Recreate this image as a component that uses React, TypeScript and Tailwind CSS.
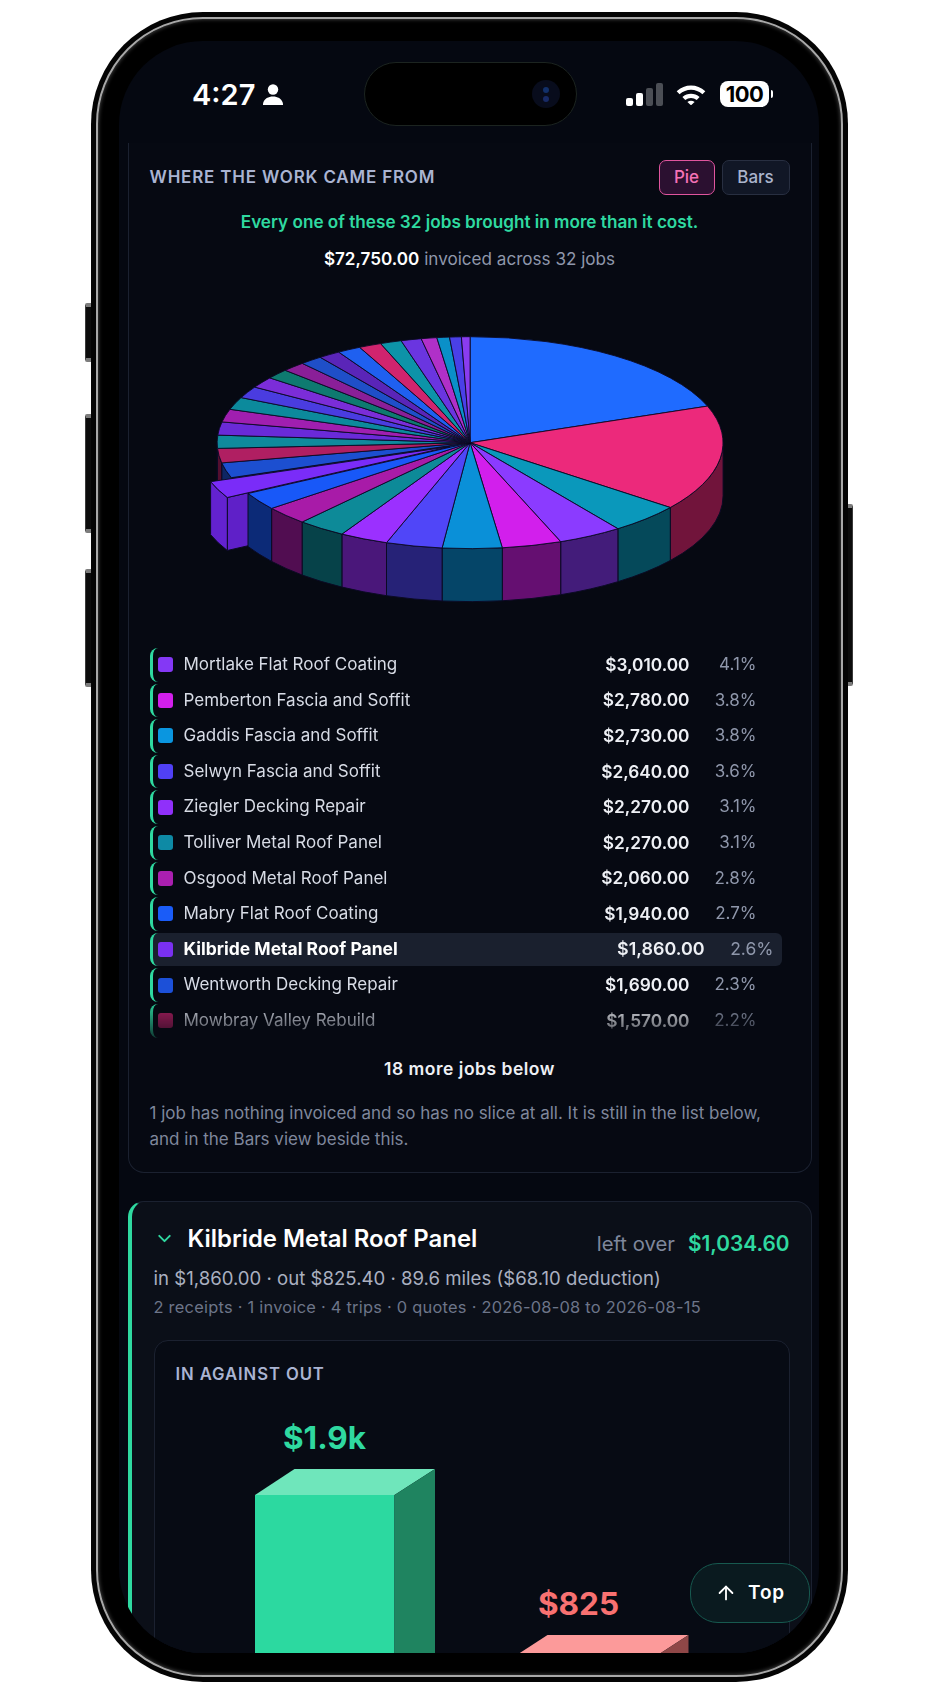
import { ArrowUp, ChevronDown } from "lucide-react";

const font = { fontFamily: "Inter, 'Liberation Sans', sans-serif" };

const CX = 468.6;
const CY = 442.7;
const RX = 253;
const RY = 106;
const DEPTH = 53;

const slices: [number, string][] = [
  [19.4, "#1f6bff"], [16.1, "#ec297b"], [4.6, "#0a98bb"], [4.1, "#8b3bff"], [3.8, "#d21fec"],
  [3.8, "#0a90d8"], [3.6, "#5046f8"], [3.1, "#9b30ff"], [3.1, "#0d8a98"], [2.8, "#a81ba8"],
  [2.7, "#1858f8"], [2.6, "#7a2cf8"], [2.3, "#1c4fd0"], [2.2, "#b01f62"], [2.0, "#0f8a9c"],
  [2.0, "#6a2ad8"], [1.95, "#a01fb0"], [1.9, "#0c8a9c"], [1.8, "#4a3ce0"], [1.67, "#7b2dd8"],
  [1.5, "#0e7a70"], [1.5, "#8a1f98"], [1.45, "#1f4fc8"], [1.4, "#5a25b8"], [1.5, "#1f60f0"],
  [1.44, "#d0246e"], [1.36, "#0d93a8"], [1.3, "#6a35e0"], [1.0, "#b030c8"], [0.8, "#0a90c8"],
  [0.75, "#4a40e8"], [0.55, "#8a3cf0"],
];

const KILBRIDE = 11;
const OFF = { x: -20.7, y: 4 };

function pt(deg: number, dx = 0, dy = 0) {
  const r = (deg * Math.PI) / 180;
  return `${(CX + dx + RX * Math.cos(r)).toFixed(1)} ${(CY + dy + RY * Math.sin(r)).toFixed(1)}`;
}

function wedge(a: number, b: number, dx = 0, dy = 0) {
  return `M${CX + dx} ${CY + dy} L${pt(a, dx, dy)} A${RX} ${RY} 0 ${b - a > 180 ? 1 : 0} 1 ${pt(b, dx, dy)} Z`;
}

function side(a: number, b: number, dx = 0, dy = 0) {
  return `M${pt(a, dx, dy)} A${RX} ${RY} 0 0 1 ${pt(b, dx, dy)} L${pt(b, dx, dy + DEPTH)} A${RX} ${RY} 0 0 0 ${pt(a, dx, dy + DEPTH)} Z`;
}

function face(a: number, dx = 0, dy = 0) {
  return `M${CX + dx} ${CY + dy} L${pt(a, dx, dy)} L${pt(a, dx, dy + DEPTH)} L${CX + dx} ${CY + dy + DEPTH} Z`;
}

function darken(hex: string, k = 0.48) {
  const n = parseInt(hex.slice(1), 16);
  const c = [(n >> 16) & 255, (n >> 8) & 255, n & 255].map((v) => Math.round(v * k));
  return `rgb(${c[0]},${c[1]},${c[2]})`;
}

function Pie() {
  const total = slices.reduce((sum, s) => sum + s[0], 0);
  let at = -90;
  const parts = slices.map(([pct, color], i) => {
    const a = at;
    const b = at + (pct / total) * 360;
    at = b;
    return { a, b, color, i };
  });
  const ex = parts[KILBRIDE];
  const rest = parts.filter((p) => p.i !== KILBRIDE);
  const visible = rest.filter((p) => p.a < 180 && p.b > 0);
  const stroke = "#0b0a24";
  const sidePath = (p: (typeof parts)[number]) => (
    <path key={p.i} d={side(Math.max(p.a, 0), Math.min(p.b, 180))} fill={darken(p.color)} stroke={stroke} />
  );
  return (
    <svg viewBox="148.5 271 642 377" className="block w-[642px] h-[377px]">
      {/* what shows through the gap goes first, the pulled out slice sits in front of it */}
      <path d={face(ex.b)} fill="#12306f" stroke={stroke} />
      {visible.filter((p) => p.i > KILBRIDE).map(sidePath)}
      <path d={face(ex.a, OFF.x, OFF.y)} fill="#5f20c8" stroke={stroke} />
      {visible.filter((p) => p.i < KILBRIDE).map(sidePath)}
      {rest.map((p) => (
        <path key={p.i} d={wedge(p.a, p.b)} fill={p.color} stroke={stroke} strokeWidth={0.9} />
      ))}
      <path d={side(ex.a, ex.b, OFF.x, OFF.y)} fill="#6322d0" stroke={stroke} />
      <path d={wedge(ex.a, ex.b, OFF.x, OFF.y)} fill={ex.color} stroke={stroke} strokeWidth={0.9} />
    </svg>
  );
}

const rows = [
  ["Mortlake Flat Roof Coating", "$3,010.00", "4.1%", "#8438f5"],
  ["Pemberton Fascia and Soffit", "$2,780.00", "3.8%", "#d21fec"],
  ["Gaddis Fascia and Soffit", "$2,730.00", "3.8%", "#0a96e0"],
  ["Selwyn Fascia and Soffit", "$2,640.00", "3.6%", "#5040f5"],
  ["Ziegler Decking Repair", "$2,270.00", "3.1%", "#9030fa"],
  ["Tolliver Metal Roof Panel", "$2,270.00", "3.1%", "#0e8aa5"],
  ["Osgood Metal Roof Panel", "$2,060.00", "2.8%", "#aa1fb0"],
  ["Mabry Flat Roof Coating", "$1,940.00", "2.7%", "#1a5cf8"],
  ["Kilbride Metal Roof Panel", "$1,860.00", "2.6%", "#7a30f0"],
  ["Wentworth Decking Repair", "$1,690.00", "2.3%", "#1c50d8"],
  ["Mowbray Valley Rebuild", "$1,570.00", "2.2%", "#b01f62"],
];

function Wifi() {
  return (
    <svg viewBox="0 0 32 22" className="w-[32px] h-[21px]">
      <path d="M1 7.500C9.500-.5 22.500-.5 31 7.500l-3 3.200C21 4.300 11 4.300 4 10.700z" fill="#fff" />
      <path d="M7 13.600c5.200-4.600 12.800-4.600 18 0l-3 3.200c-3.500-3-8.500-3-12 0z" fill="#fff" />
      <path d="M12.200 18.800c2.200-1.700 5.400-1.700 7.600 0L16 22.300z" fill="#fff" />
    </svg>
  );
}

function StatusBar() {
  return (
    <div className="relative h-[102px] shrink-0 flex items-start pt-[38px]">
      <div className="ml-[73px] flex items-center h-[30px] text-white text-[29px] font-semibold">
        <span className="leading-none">4:27</span>
        <svg viewBox="0 0 20 21" className="ml-[8px] w-[20px] h-[21px]" fill="#fff">
          <circle cx="10" cy="5.500" r="5.200" />
          <path d="M0 21c0-.8 0-1.600.3-2.400C1.500 14.800 5.300 12.500 10 12.500s8.500 2.300 9.700 6.100c.3.8.3 1.600.3 2.400z" />
        </svg>
      </div>
      <div className="absolute left-[245px] top-[21px] w-[213px] h-[64px] rounded-full bg-black border border-[#1c2420] flex items-center justify-end pr-[16px]">
        <div className="w-[28px] h-[28px] rounded-full bg-[#080c1c] flex flex-col items-center justify-center gap-[3px]">
          <span className="w-[6px] h-[6px] rounded-full bg-[#12306a]" />
          <span className="w-[6px] h-[6px] rounded-full bg-[#182a66]" />
        </div>
      </div>
      <div className="ml-auto mr-[46px] flex items-center h-[30px]">
        <div className="flex items-end gap-[3px] h-[23px]">
          <span className="w-[7px] h-[8px] rounded-[2px] bg-white" />
          <span className="w-[7px] h-[13px] rounded-[2px] bg-white" />
          <span className="w-[7px] h-[18px] rounded-[2px] bg-[#4b4e55]" />
          <span className="w-[7px] h-[23px] rounded-[2px] bg-[#4b4e55]" />
        </div>
        <div className="ml-[12px]">
          <Wifi />
        </div>
        <div className="ml-[13px] w-[49px] h-[26px] rounded-[8px] bg-white flex items-center justify-center text-black text-[22px] font-bold tracking-[-0.5px]">
          100
        </div>
        <span className="ml-[2px] w-[2px] h-[8px] rounded-r-full bg-white" />
      </div>
    </div>
  );
}

function WorkCard() {
  return (
    <div className="h-[1030px] border-x border-b border-[#1b2130] rounded-b-[16px] bg-[#060912] pl-[21px] pr-[21px] pt-[17px]">
      <div className="h-[35px] flex items-center justify-between">
        <span className="text-[17px] font-semibold tracking-[0.8px] text-[#aab4d2]">WHERE THE WORK CAME FROM</span>
        <div className="flex gap-[7px] text-[17px] font-medium">
          <span className="w-[56px] h-[35px] flex items-center justify-center rounded-[7px] border border-[#e0559e] bg-[#2b1030] text-[#f472b6]">
            Pie
          </span>
          <span className="w-[68px] h-[35px] flex items-center justify-center rounded-[7px] border border-[#282f41] bg-[#111726] text-[#aab4cc]">
            Bars
          </span>
        </div>
      </div>
      <div className="mt-[15px] h-[24px] leading-[24px] text-center text-[17.150px] font-semibold text-[#2fd9a0]">
        Every one of these 32 jobs brought in more than it cost.
      </div>
      <div className="mt-[13px] h-[24px] leading-[24px] text-center text-[17.100px] text-[#8f97ab]">
        <span className="font-semibold text-white">$72,750.00</span> invoiced across 32 jobs
      </div>
      <Pie />
      <div className="h-[391px] [mask-image:linear-gradient(to_bottom,black_90%,transparent_103%)]">
        {rows.map(([name, price, pct, color]) => {
          const on = name.startsWith("Kilbride");
          return (
            <div
              key={name}
              className={`w-[632px] h-[33.600px] mb-[2px] flex items-center rounded-l-[8px] rounded-r-[6px] border-l-[3px] border-[#2fd9a0] ${
                on ? "bg-[#1a202e] pr-[8px] text-[17.500px]" : "pr-[25px] text-[17px]"
              }`}
            >
              <span className="ml-[5px] w-[15px] h-[15px] rounded-[3px] shrink-0" style={{ background: color }} />
              <span className={`ml-[11px] ${on ? "font-bold text-white" : "text-[#d8dce6]"}`}>{name}</span>
              <span className={`ml-auto font-semibold text-[#eef0f5] ${on ? "text-[17.900px]" : "text-[17.300px]"}`}>{price}</span>
              <span className={`${on ? "w-[69px]" : "w-[67px]"} text-right text-[#8f97ab]`}>{pct}</span>
            </div>
          );
        })}
      </div>
      <div className="mt-[18px] h-[24px] leading-[24px] text-center text-[17.500px] font-semibold tracking-[0.5px] text-[#eef0f5]">
        18 more jobs below
      </div>
      <p className="mt-[19px] text-[17px] leading-[26px] text-[#7f879c]">
        1 job has nothing invoiced and so has no slice at all. It is still in the list below, and in the Bars view beside
        this.
      </p>
    </div>
  );
}

function Chart() {
  return (
    <svg viewBox="154.500 1391 632 300" className="block w-[632px] h-[300px]">
      <text x="324" y="1448" textAnchor="middle" fontSize="31.500" fontWeight="700" fill="#2fd9a0" style={font}>
        $1.9k
      </text>
      <polygon points="254.500,1494 294,1468 434.500,1468 394,1494" fill="#6fe6bb" />
      <rect x="254.500" y="1494" width="139.500" height="200" fill="#2cd9a0" />
      <polygon points="394,1494 434.500,1468 434.500,1694 394,1694" fill="#1f8460" />
      <text x="578" y="1614" textAnchor="middle" fontSize="31.500" fontWeight="700" fill="#f87171" style={font}>
        $825
      </text>
      <polygon points="507,1660 547,1634 688,1634 648,1660" fill="#fc9a9a" />
      <polygon points="648,1660 688,1634 688,1694 648,1694" fill="#8f4747" />
    </svg>
  );
}

function JobCard() {
  return (
    <div className="mt-[28px] h-[600px] border border-l-[4px] border-[#1b2130] border-l-[#2fd9a0] rounded-[16px] bg-[#0b0f18] pl-[22px] pr-[21px]">
      <div className="pt-[13px] h-[60px] flex items-center justify-between">
        <div className="flex items-center">
          <ChevronDown size={21} strokeWidth={2.2} className="text-[#2fd9a0]" />
          <span className="ml-[13px] text-[23.900px] font-semibold text-white">Kilbride Metal Roof Panel</span>
        </div>
        <div className="pt-[11px] text-[20.300px]">
          <span className="text-[#7f879c]">left over</span>
          <span className="ml-[13px] text-[20.800px] font-semibold text-[#2fd9a0]">$1,034.60</span>
        </div>
      </div>
      <div className="mt-[3px] h-[26px] leading-[26px] text-[18.600px] text-[#aab0c0]">
        in $1,860.00 · out $825.40 · 89.6 miles ($68.10 deduction)
      </div>
      <div className="mt-[4px] h-[24px] leading-[24px] text-[16.400px] tracking-[0.25px] text-[#6d7589]">
        2 receipts · 1 invoice · 4 trips · 0 quotes · 2026-08-08 to 2026-08-15
      </div>
      <div className="mt-[21px] h-[400px] border border-[#1b2130] rounded-[14px] bg-[#070b14] overflow-hidden">
        <div className="pt-[21px] pl-[21px] h-[51px] text-[16.700px] font-semibold tracking-[0.9px] text-[#aab4d2]">IN AGAINST OUT</div>
        <Chart />
      </div>
    </div>
  );
}

function SideButton({ h }: { h: number }) {
  return (
    <div
      className="w-[7px] rounded-l-[2px] bg-[#0c0c0c] border-l border-y-[4px] border-l-[#3a3a3a] border-y-[#7d7d7d]"
      style={{ height: h }}
    />
  );
}

export default function App() {
  return (
    <div className="relative w-[941px] h-[1693px] bg-white overflow-hidden pt-[12px] pl-[91px]" style={font}>
      <div className="absolute left-[85px] top-[303px] flex flex-col">
        <SideButton h={59} />
        <div className="h-[52px]" />
        <SideButton h={119} />
        <div className="h-[36px]" />
        <SideButton h={118} />
      </div>
      <div className="absolute left-[846px] top-[504px] w-[7px] h-[182px] rounded-r-[2px] bg-[#0c0c0c] border-r border-y-[4px] border-r-[#3a3a3a] border-y-[#7d7d7d]" />
      <div className="relative w-[757px] h-[1670px] rounded-[112px] bg-[#040404] p-[5px]">
        <div className="h-full rounded-[107px] border-[2px] border-[#a8a8a8] bg-black shadow-[inset_0_0_4px_#555] p-[21px] pt-[22px] pb-[22px]">
          <div className="relative w-[700px] h-[1612px] rounded-[84px] bg-[#050811] overflow-hidden flex flex-col">
            <StatusBar />
            <div className="pl-[8.500px] pr-[7.500px] h-[1510px] overflow-hidden">
              <WorkCard />
              <JobCard />
            </div>
            <div className="absolute right-[9px] bottom-[30px] w-[120px] h-[60px] rounded-[28px] border border-[#17594f] bg-[#0a1a1f] flex items-center justify-center gap-[11px] text-white">
              <ArrowUp size={22} strokeWidth={2} />
              <span className="text-[19px] font-semibold tracking-[0.8px]">Top</span>
            </div>
          </div>
        </div>
      </div>
    </div>
  );
}
